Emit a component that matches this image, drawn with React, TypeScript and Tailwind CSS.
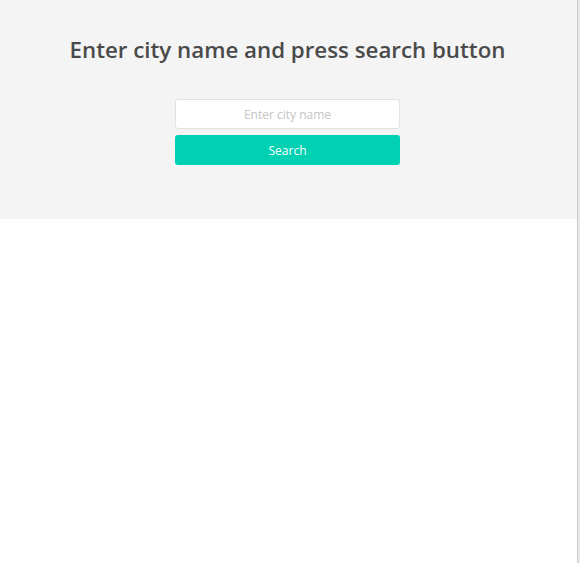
import React from "react";

export default function App() {
  return (
    <div className="flex h-[563px] w-[580px] bg-white" style={{ fontFamily: '"Open Sans", "Noto Sans", sans-serif' }}>
      <div className="w-[577px]">
        <section className="flex h-[219px] flex-col items-center bg-[#f4f4f4] pr-[2px] pt-[34px]">
          <h1 className="text-[22.3px] font-semibold leading-[32px] text-[#4a4a4a]">Enter city name and press search button</h1>
          <div className="mt-[33px] flex w-[225px] flex-col gap-[6px]">
            <input
              placeholder="Enter city name"
              className="h-[30px] w-full rounded-[3px] border border-[#e2e2e2] bg-white text-center text-[12px] text-[#444] outline-none placeholder:text-[#c4c4c4]"
            />
            <button className="h-[30px] w-full rounded-[3px] bg-[#00d1b2] pt-[2px] text-[12px] text-white">Search</button>
          </div>
        </section>
      </div>
      <div className="w-[1px] bg-[#c9c9c9]" />
      <div className="w-[2px] bg-[#e8e8e8]" />
    </div>
  );
}
